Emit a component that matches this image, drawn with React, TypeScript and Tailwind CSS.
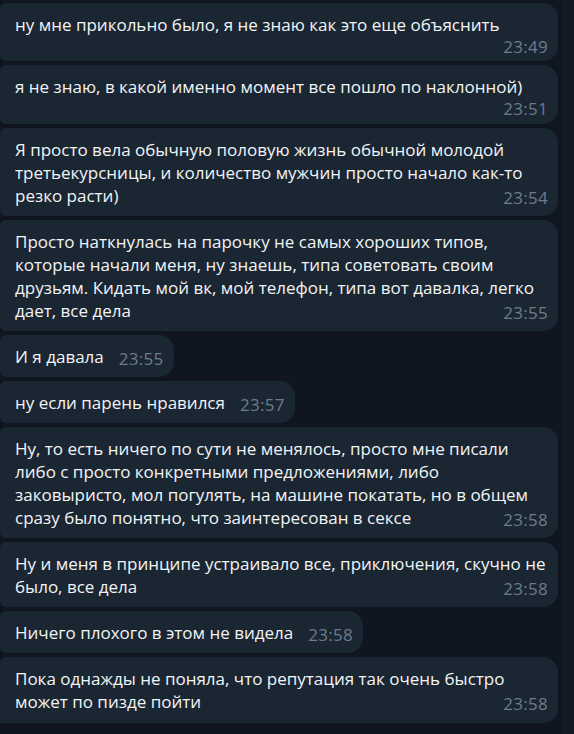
const messages = [
  {
    id: 1,
    lines: ["ну мне прикольно было, я не знаю как это еще объяснить"],
    time: "23:49",
    timeOwnRow: true,
    wide: true,
  },
  {
    id: 2,
    lines: ["я не знаю, в какой именно момент все пошло по наклонной)"],
    time: "23:51",
    timeOwnRow: true,
    wide: true,
  },
  {
    id: 3,
    lines: [
      "Я просто вела обычную половую жизнь обычной молодой",
      "третьекурсницы, и количество мужчин просто начало как-то",
      "резко расти)",
    ],
    time: "23:54",
    wide: true,
  },
  {
    id: 4,
    lines: [
      "Просто наткнулась на парочку не самых хороших типов,",
      "которые начали меня, ну знаешь, типа советовать своим",
      "друзьям. Кидать мой вк, мой телефон, типа вот давалка, легко",
      "дает, все дела",
    ],
    time: "23:55",
    wide: true,
  },
  { id: 5, lines: ["И я давала"], time: "23:55" },
  { id: 6, lines: ["ну если парень нравился"], time: "23:57" },
  {
    id: 7,
    lines: [
      "Ну, то есть ничего по сути не менялось, просто мне писали",
      "либо с просто конкретными предложениями, либо",
      "заковыристо, мол погулять, на машине покатать, но в общем",
      "сразу было понятно, что заинтересован в сексе",
    ],
    time: "23:58",
    wide: true,
  },
  {
    id: 8,
    lines: [
      "Ну и меня в принципе устраивало все, приключения, скучно не",
      "было, все дела",
    ],
    time: "23:58",
    wide: true,
  },
  { id: 9, lines: ["Ничего плохого в этом не видела"], time: "23:58" },
  {
    id: 10,
    lines: [
      "Пока однажды не поняла, что репутация так очень быстро",
      "может по пизде пойти",
    ],
    time: "23:58",
    wide: true,
    last: true,
  },
];

const Time = ({ value }) => (
  <span className="text-[17px] leading-[15px] tracking-[0.3px] text-[#6b7c8d] whitespace-nowrap">
    {value}
  </span>
);

const Bubble = ({ msg }) => {
  const body = msg.lines.slice(0, -1);
  const lastLine = msg.lines[msg.lines.length - 1];

  return (
    <div
      className={`bg-[#1b2633] pl-[15px] pr-[10px] pt-[10px] rounded-tl-[6px] rounded-r-[15px] ${
        msg.last ? "rounded-bl-none pb-[10px]" : "rounded-bl-[6px] pb-[9px]"
      } ${msg.wide ? "w-[558px]" : "w-fit"}`}
    >
      <div className="text-[17px] leading-[23px] text-[#f2f4f6]">
        {body.map((line) => (
          <div key={line} className="whitespace-nowrap">
            {line}
          </div>
        ))}
        {msg.timeOwnRow ? (
          <>
            <div className="whitespace-nowrap">{lastLine}</div>
            <div className="flex justify-end mt-[3px] -mb-[1.5px]">
              <Time value={msg.time} />
            </div>
          </>
        ) : (
          <div className="flex items-end justify-between gap-[15px]">
            <span className="whitespace-nowrap">{lastLine}</span>
            <span className="-mb-[2px]">
              <Time value={msg.time} />
            </span>
          </div>
        )}
      </div>
    </div>
  );
};

const App = () => {
  return (
    <div
      className="w-[574px] h-[734px] overflow-hidden bg-[#0f1620] flex"
      style={{ fontFamily: '"Open Sans", "Noto Sans", sans-serif' }}
    >
      <div className="flex-1 flex flex-col gap-[4px] pt-[2.5px]">
        {messages.map((msg) => (
          <Bubble key={msg.id} msg={msg} />
        ))}
      </div>
      <div className="w-[12px] bg-[#121a24]" />
    </div>
  );
};

export default App;
